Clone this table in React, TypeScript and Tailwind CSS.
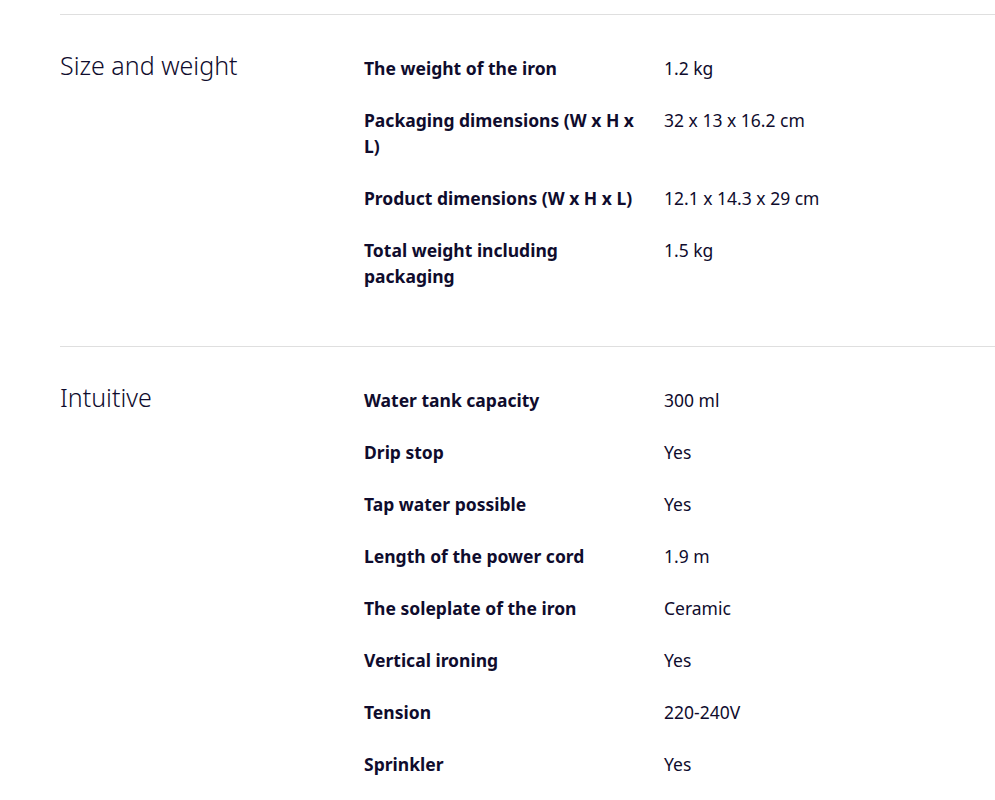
const sections = [
  {
    title: "Size and weight",
    rows: [
      ["The weight of the iron", "1.2 kg"],
      ["Packaging dimensions (W x H x L)", "32 x 13 x 16.2 cm"],
      ["Product dimensions (W x H x L)", "12.1 x 14.3 x 29 cm"],
      ["Total weight including packaging", "1.5 kg"],
    ],
  },
  {
    title: "Intuitive",
    rows: [
      ["Water tank capacity", "300 ml"],
      ["Drip stop", "Yes"],
      ["Tap water possible", "Yes"],
      ["Length of the power cord", "1.9 m"],
      ["The soleplate of the iron", "Ceramic"],
      ["Vertical ironing", "Yes"],
      ["Tension", "220-240V"],
      ["Sprinkler", "Yes"],
    ],
  },
];

export default function App() {
  return (
    <div
      className="min-h-screen bg-white pl-[60px] pt-[14px] text-[#0f0c2d]"
      style={{ fontFamily: '"Noto Sans", "Open Sans", sans-serif' }}
    >
      {sections.map((section) => (
        <section key={section.title} className="border-t border-[#dfdfdf] pt-[40px] pb-[31px]">
          <div className="grid grid-cols-[304px_300px_1fr]">
            <h2 className="text-[25px] font-light leading-[26px] mt-[-3px]">{section.title}</h2>
            <dl className="col-span-2">
              {section.rows.map(([label, value]) => (
                <div key={label} className="grid grid-cols-[300px_1fr] pb-[26px] text-[17.5px] leading-[26px]">
                  <dt className="w-[278px] font-bold">{label}</dt>
                  <dd>{value}</dd>
                </div>
              ))}
            </dl>
          </div>
        </section>
      ))}
    </div>
  );
}
